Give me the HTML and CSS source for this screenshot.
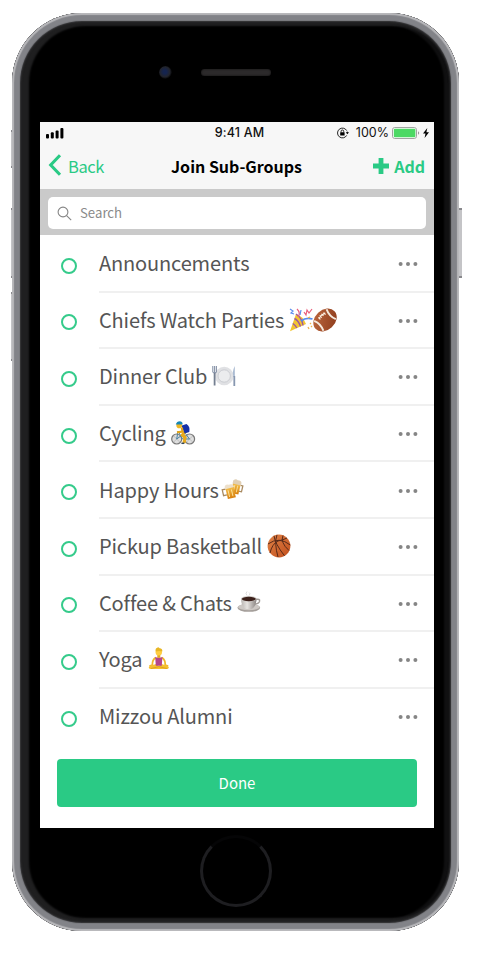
FILE: index.html
```html
<!DOCTYPE html>
<html lang="en">
<head>
<meta charset="utf-8">
<title>Join Sub-Groups</title>
<link rel="stylesheet" href="styles.css">
</head>
<body>
<svg class="defs" width="0" height="0">
  <defs>
    <symbol id="dots" viewBox="0 0 20 6"><g fill="#858585"><circle cx="2.6" cy="3" r="2"/><circle cx="10" cy="3" r="2"/><circle cx="17.4" cy="3" r="2"/></g></symbol>
    <linearGradient id="ball" x1="0" y1="0" x2="1" y2="1"><stop offset="0" stop-color="#e08448"/><stop offset="1" stop-color="#c24e1c"/></linearGradient>
    <linearGradient id="leather" x1="0" y1="0" x2="1" y2="1"><stop offset="0" stop-color="#c06c43"/><stop offset="1" stop-color="#8a3818"/></linearGradient>
    <linearGradient id="beer" x1="0" y1="0" x2="0" y2="1"><stop offset="0" stop-color="#f6c552"/><stop offset="1" stop-color="#d87f0c"/></linearGradient>
    <linearGradient id="cup" x1="0" y1="0" x2="1" y2="0"><stop offset="0" stop-color="#b9b5b2"/><stop offset=".4" stop-color="#e6e3e0"/><stop offset="1" stop-color="#8a8481"/></linearGradient>
  </defs>
</svg>
<div class="phone">
  <i class="key key-mute"></i><i class="key key-up"></i><i class="key key-down"></i><i class="key key-power"></i>
  <div class="body">
    <div class="forehead"><span class="camera"></span><span class="speaker"></span></div>
    <main class="screen">
      <div class="status">
        <svg class="signal" width="18" height="11" viewBox="0 0 18 11"><g><rect x="0" y="6" width="3" height="4.5" rx="1"/><rect x="4.8" y="4.3" width="3" height="6.2" rx="1"/><rect x="9.6" y="2.4" width="3" height="8.1" rx="1"/><rect x="14.4" y="0" width="3" height="10.5" rx="1"/></g></svg>
        <span class="time">9:41 AM</span>
        <span class="power">
          <svg width="12" height="12" viewBox="0 0 12 12"><path d="M9.7 3.6A4.9 4.9 0 1 0 9.7 8.4M10.3 4.6v1.6" fill="none" stroke="#111" stroke-width=".9"/><path d="M8.8 5.3H12l-1.6 2z"/><rect x="3.2" y="5.2" width="4.4" height="3.4" rx=".4"/><path d="M4.1 5.5V4.3a1.3 1.3 0 0 1 2.6 0v1.2" fill="none" stroke="#111" stroke-width=".9"/></svg>
          <span class="pct">100%</span>
          <svg class="battery" width="28" height="12" viewBox="0 0 28 12"><rect x=".5" y=".5" width="24" height="11" rx="2.3" fill="#fff" stroke="#a2a2a2"/><rect x="1.8" y="1.8" width="21.6" height="8.4" rx="1" fill="#4cd964"/><path d="M26 4.3q1.2.5 1.2 1.7T26 7.7z" fill="#999"/></svg>
          <svg class="bolt" width="6" height="10" viewBox="0 0 6 10"><path d="M4.3 0 0 5.5h2.5L1.6 10 6 4.2H3.4z"/></svg>
        </span>
      </div>
      <header class="nav">
        <a class="back"><svg width="14" height="22" viewBox="0 0 14 22"><path d="M12 1.2 2.7 11 12 20.8" fill="none" stroke="#2aca85" stroke-width="3.1"/></svg><span>Back</span></a>
        <h1><span>Join Sub-Groups</span></h1>
        <a class="add"><svg width="16" height="16" viewBox="0 0 16 16"><path d="M5.6 0h4.8v5.6H16v4.8h-5.6V16H5.6v-5.6H0V5.6h5.6z" fill="#2aca85"/></svg><span>Add</span></a>
      </header>
      <div class="search"><div class="field"><svg width="15" height="15" viewBox="0 0 15 15"><g fill="none" stroke="#858585" stroke-width="1.1"><circle cx="6" cy="6" r="4.9"/><path d="m9.6 9.6 4.6 4.6"/></g></svg><span>Search</span></div></div>
      <ul class="list">
        <li><i class="radio"></i><div class="row"><span class="label">Announcements</span><svg class="more"><use href="#dots"/></svg></div></li>
        <li><i class="radio"></i><div class="row"><span class="label">Chiefs Watch Parties</span>
          <svg class="emoji" viewBox="0 0 24 24"><path d="M7 6 1 23.3 17 16Q14 8 7 6z" fill="#f2c531"/><path d="M5.5 10.5q4 2 6 8M3.8 15.5q3 2 4 4.5M7 6q6 4 7 11.5" fill="none" stroke="#9c58a2" stroke-width="1.4"/><path d="M12 13q5-4 11.5-2" fill="none" stroke="#558bec" stroke-width="1.7"/><path d="M8 1q4 4 1 8M15 4l2 3 1-5 2 3 3-4" fill="none" stroke="#e8607e" stroke-width="1.2"/><path d="m1 1 3 2-2 2 3 1M12 2l-1 5" stroke="#5c8eee" stroke-width="1.2" fill="none"/><path d="m21 15 1 1m-3 3 1 2m2-3 1 1M19 10l2-1" stroke="#efb34c" stroke-width="1.3"/></svg>
          <svg class="emoji next" viewBox="0 0 24 24"><g transform="rotate(-43 12 12)"><ellipse cx="12" cy="12" rx="13" ry="10" fill="url(#leather)"/><path d="M3.5 5.2q3 6.8 0 13.6M20.5 5.2q-3 6.8 0 13.6" stroke="#f4eade" stroke-width="2" fill="none"/><path d="M8 7q5-1.6 9 0M9 5.5v3M11.3 5v3M13.6 5v3M16 5.5v3" stroke="#fff5e8" stroke-width="1.1" fill="none"/></g></svg>
          <svg class="more"><use href="#dots"/></svg></div></li>
        <li><i class="radio"></i><div class="row"><span class="label">Dinner Club</span>
          <svg class="emoji" viewBox="0 0 24 24"><circle cx="12.2" cy="12" r="9.3" fill="#e0e1e4"/><circle cx="12.2" cy="12" r="6.2" fill="#ebecee" stroke="#cbcdd2"/><path d="M.8 2v6q1.8 2 3.6 0V2M2.6 2v8" fill="none" stroke="#8793a8" stroke-width="1.1"/><path d="M2.6 9v12.5" stroke="#747f91" stroke-width="1.8"/><path d="M22.8 2q-3 6-1.4 11h1.4z" fill="#aabbd2"/><path d="M22.3 12v10" stroke="#8797b0" stroke-width="1.8"/></svg>
          <svg class="more"><use href="#dots"/></svg></div></li>
        <li><i class="radio"></i><div class="row"><span class="label">Cycling</span>
          <svg class="emoji" viewBox="0 0 24 24"><g fill="#dedede" stroke="#777" stroke-width="1.2"><circle cx="5.7" cy="18" r="5"/><circle cx="18.6" cy="18" r="5"/></g><path d="M2.2 14.5l7 7M9.2 14.5l-7 7M15.1 14.5l7 7M22.1 14.5l-7 7" stroke="#aaa" stroke-width=".6"/><path d="M5.7 18 7 10l4.5 8h7L14 12z" fill="none" stroke="#4a83a5" stroke-width="1"/><path d="m14.5 10-3 4 2.5 2.5-1 5.5" fill="none" stroke="#e8aa1c" stroke-width="3.2"/><path d="M10.2 4.8 15.5 3q4 2.4 2.8 8l-4.6 1.6q-1.8-4-3.5-7.8z" fill="#1632a8"/><path d="m10.8 6.5.7 4-5.5.8" fill="none" stroke="#e3a318" stroke-width="2.2"/><circle cx="8.2" cy="4.4" r="2.8" fill="#efb722"/><path d="M4.8 3.6Q5.6.2 9 .2q3.3.8 2.4 3.4z" fill="#1686b5"/><path d="M10.4 22.3h3" stroke="#35495d" stroke-width="1.5"/></svg>
          <svg class="more"><use href="#dots"/></svg></div></li>
        <li><i class="radio"></i><div class="row"><span class="label">Happy Hours</span>
          <svg class="emoji tight" viewBox="0 0 24 24"><g transform="translate(1.8 1.4) scale(.86)"><g transform="rotate(13 16 9)"><path d="M20 6h2.8v7H19" fill="none" stroke="#a98a60" stroke-width="1.5"/><path d="M11 4h9v13h-9z" fill="url(#beer)"/><path d="M13.5 7v8M17 7v8" stroke="#fae29b"/><path d="M10.5 2q3-3 5-1 4-1 5 2v3h-10z" fill="#e0cfb4"/></g><g transform="rotate(-13 9 14)"><path d="M4 10H0v7h4" fill="none" stroke="#a98a60" stroke-width="1.5"/><path d="M4 8h9.5v14H4z" fill="url(#beer)"/><path d="M6.5 12v8M10.5 12v8" stroke="#ffe6a0"/><path d="M3.5 7q2-3 5-1 4-1 5.5 2v2H3.5z" fill="#ede0cb"/></g></g></svg>
          <svg class="more"><use href="#dots"/></svg></div></li>
        <li><i class="radio"></i><div class="row"><span class="label">Pickup Basketball</span>
          <svg class="emoji" viewBox="0 0 24 24"><circle cx="12" cy="12" r="11.4" fill="url(#ball)"/><path d="M7 1.8q1 8 10.5 20M1 10Q12 2 23.3 11M10 .8Q7 9 11 23M3 19q2-9 8-12 5-1 9-3M16 1.5q-3 7 6 15" fill="none" stroke="#572a19" stroke-width="1"/></svg>
          <svg class="more"><use href="#dots"/></svg></div></li>
        <li><i class="radio"></i><div class="row"><span class="label">Coffee &amp; Chats</span>
          <svg class="emoji" viewBox="0 0 24 24"><ellipse cx="11.8" cy="16.8" rx="11.4" ry="4" fill="#a49e9a"/><ellipse cx="11.8" cy="16" rx="10.8" ry="3.2" fill="#cdc8c4"/><path d="M18.5 8.5q5-1 4 2-1 2.6-5 2.6" fill="none" stroke="#a19b97" stroke-width="1.4"/><path d="M4 7.6h15.5q0 8-5 10.4h-5.5Q4 16 4 7.6z" fill="url(#cup)"/><ellipse cx="11.8" cy="7.8" rx="7.8" ry="2.8" fill="#cfcac6"/><ellipse cx="11.8" cy="8" rx="7" ry="2.2" fill="#3c211b"/><path d="M10 4.5q-2-2 0-4M12 4.5q2-2 0-3" fill="none" stroke="#ddd" stroke-width="1"/></svg>
          <svg class="more"><use href="#dots"/></svg></div></li>
        <li><i class="radio"></i><div class="row"><span class="label">Yoga</span>
          <svg class="emoji" viewBox="0 0 24 24"><path d="M8.8 10.5Q5 13 5.4 18l-3 1M14.8 10.5q3.8 2.5 3.4 7.5l3 1" fill="none" stroke="#f0b82a" stroke-width="1.8"/><path d="m9 17-6 2q-2.5 1.5 0 3h17.6q2.500-1.500 0-3l-6-2-2.700 2z" fill="#f5bf2f"/><path d="M8.200 10q3.600 1.200 7.200 0l-.6 8.800H8.800z" fill="#b5478a"/><path d="m4 21.500 7.800-1.800 8 1.800" fill="none" stroke="#d99b14" stroke-width=".8"/><path d="M10.300 7h3v3.800h-3z" fill="#e5a91b"/><circle cx="11.800" cy="5.200" r="3.200" fill="#ffce41"/><path d="M8.700 4.600Q8 1.600 10.200.8q1-1.200 2.400.5 3.200.3 2.700 3.300-3-1.300-6.600 0z" fill="#e8b623"/></svg>
          <svg class="more"><use href="#dots"/></svg></div></li>
        <li><i class="radio"></i><div class="row last"><span class="label">Mizzou Alumni</span><svg class="more"><use href="#dots"/></svg></div></li>
      </ul>
      <button class="done">Done</button>
    </main>
    <div class="chin"><span class="home"></span></div>
  </div>
</div>
</body>
</html>
```
FILE: styles.css
```css
* { box-sizing: border-box; }
body { margin: 0; background: #fff; font-family: "Noto Sans CJK SC", "Noto Sans", sans-serif; }
.defs { position: absolute; }
.phone { position: relative; width: 448px; height: 919px; margin: 13px 0 0 12px; }
.key { position: absolute; width: 3px; background: #c4c4c7; border-top: 2px solid #88888c; border-bottom: 2px solid #88888c; }
.key-mute { left: -1px; top: 117px; height: 38px; }
.key-up { left: -1px; top: 195px; height: 70px; }
.key-down { left: -1px; top: 279px; height: 69px; }
.key-power { right: -2px; top: 195px; height: 70px; }
.body {
  position: relative; width: 447px; height: 918px; border-radius: 70px; background: #000;
  padding: 9px 25px 0 28px;
  box-shadow: inset 0 0 1px 2px #b9b9bc, inset 0 0 1px 8px #828388, inset 0 0 2px 9px #303032, inset 4px 0 2px 13px #1f1f20, inset -3px 0 2px 12px #101011;
}
.body { background: linear-gradient(#000, #000); }
.forehead { height: 100px; display: flex; padding: 44px 0 0 119px; }
.camera { width: 13px; height: 13px; border-radius: 50%; background: radial-gradient(circle at 45% 45%, #15244e 0 18%, #22242c 50%, #000 72%); }
.speaker { width: 70px; height: 7px; margin: 3px 0 0 29px; border-radius: 4px; background: #2c2a2b; box-shadow: inset 0 0 2px #0a0a0a; }
.screen { width: 394px; height: 706px; background: #fff; overflow: hidden; }
.status { height: 22px; background: #f7f7f7; display: grid; grid-template-columns: 1fr auto 1fr; align-items: center; padding: 0 5px 0 6px; font: 500 12.5px/22px Inter, sans-serif; color: #111; }
.time { letter-spacing: .2px; padding-left: 4px; }
.power { display: flex; align-items: center; justify-content: flex-end; font-weight: 400; }
.pct { margin-left: 7px; }
.battery { margin-left: 3px; }
.bolt { margin-left: 3px; }
.nav { height: 45px; background: #f7f7f7; display: grid; grid-template-columns: 1fr auto 1fr; align-items: center; padding: 0 9px 1px 8px; }
.nav a { display: flex; align-items: center; color: #2aca85; }
.back { font-size: 16.5px; letter-spacing: -.4px; gap: 6px; }
.back svg { margin-bottom: 2px; }
h1 { margin: 0; font-size: 16px; font-weight: 700; line-height: 44px; color: #000; }
.nav .add { justify-content: flex-end; font-size: 16px; font-weight: 700; gap: 5px; }
.search { height: 46px; padding: 8px; background: #cacaca; }
.field { height: 32px; border-radius: 5px; background: #fff; display: flex; align-items: center; gap: 8px; padding-left: 9px; font-size: 13.2px; color: #8a8a8a; }
.field span { margin-top: -2px; }
.list { list-style: none; margin: 0; padding: 1px 0 0; }
.list li { height: 56.6px; display: flex; align-items: center; padding-left: 21px; }
.radio { width: 16px; height: 16px; border: 2px solid #35cb8b; border-radius: 50%; margin-top: 3px; }
.row { flex: 1; align-self: stretch; margin-left: 22px; border-bottom: 2px solid #f0f0f0; display: flex; align-items: center; }
.row.last { border-color: transparent; }
.label { font-size: 20px; line-height: 30px; letter-spacing: -.15px; color: #555; white-space: nowrap; }
.emoji { width: 24px; height: 24px; margin-left: 5px; overflow: visible; }
.emoji.next { margin-left: 0; }
.emoji.tight { margin-left: 2px; }
.more { width: 20px; height: 6px; margin: 2px 16px 0 auto; }
.done { display: block; width: 360px; height: 48px; margin: 13.6px 0 0 17px; padding: 0; border: 0; border-radius: 4px; background: #2aca85; color: #fff; font: 400 15px/46px "Noto Sans CJK SC", sans-serif; }
.chin { height: 100px; display: flex; justify-content: center; padding: 7px 2px 0 0; }
.home { width: 72px; height: 72px; border: 3px solid #1e1e21; border-top-color: #050506; border-radius: 50%; }
```
